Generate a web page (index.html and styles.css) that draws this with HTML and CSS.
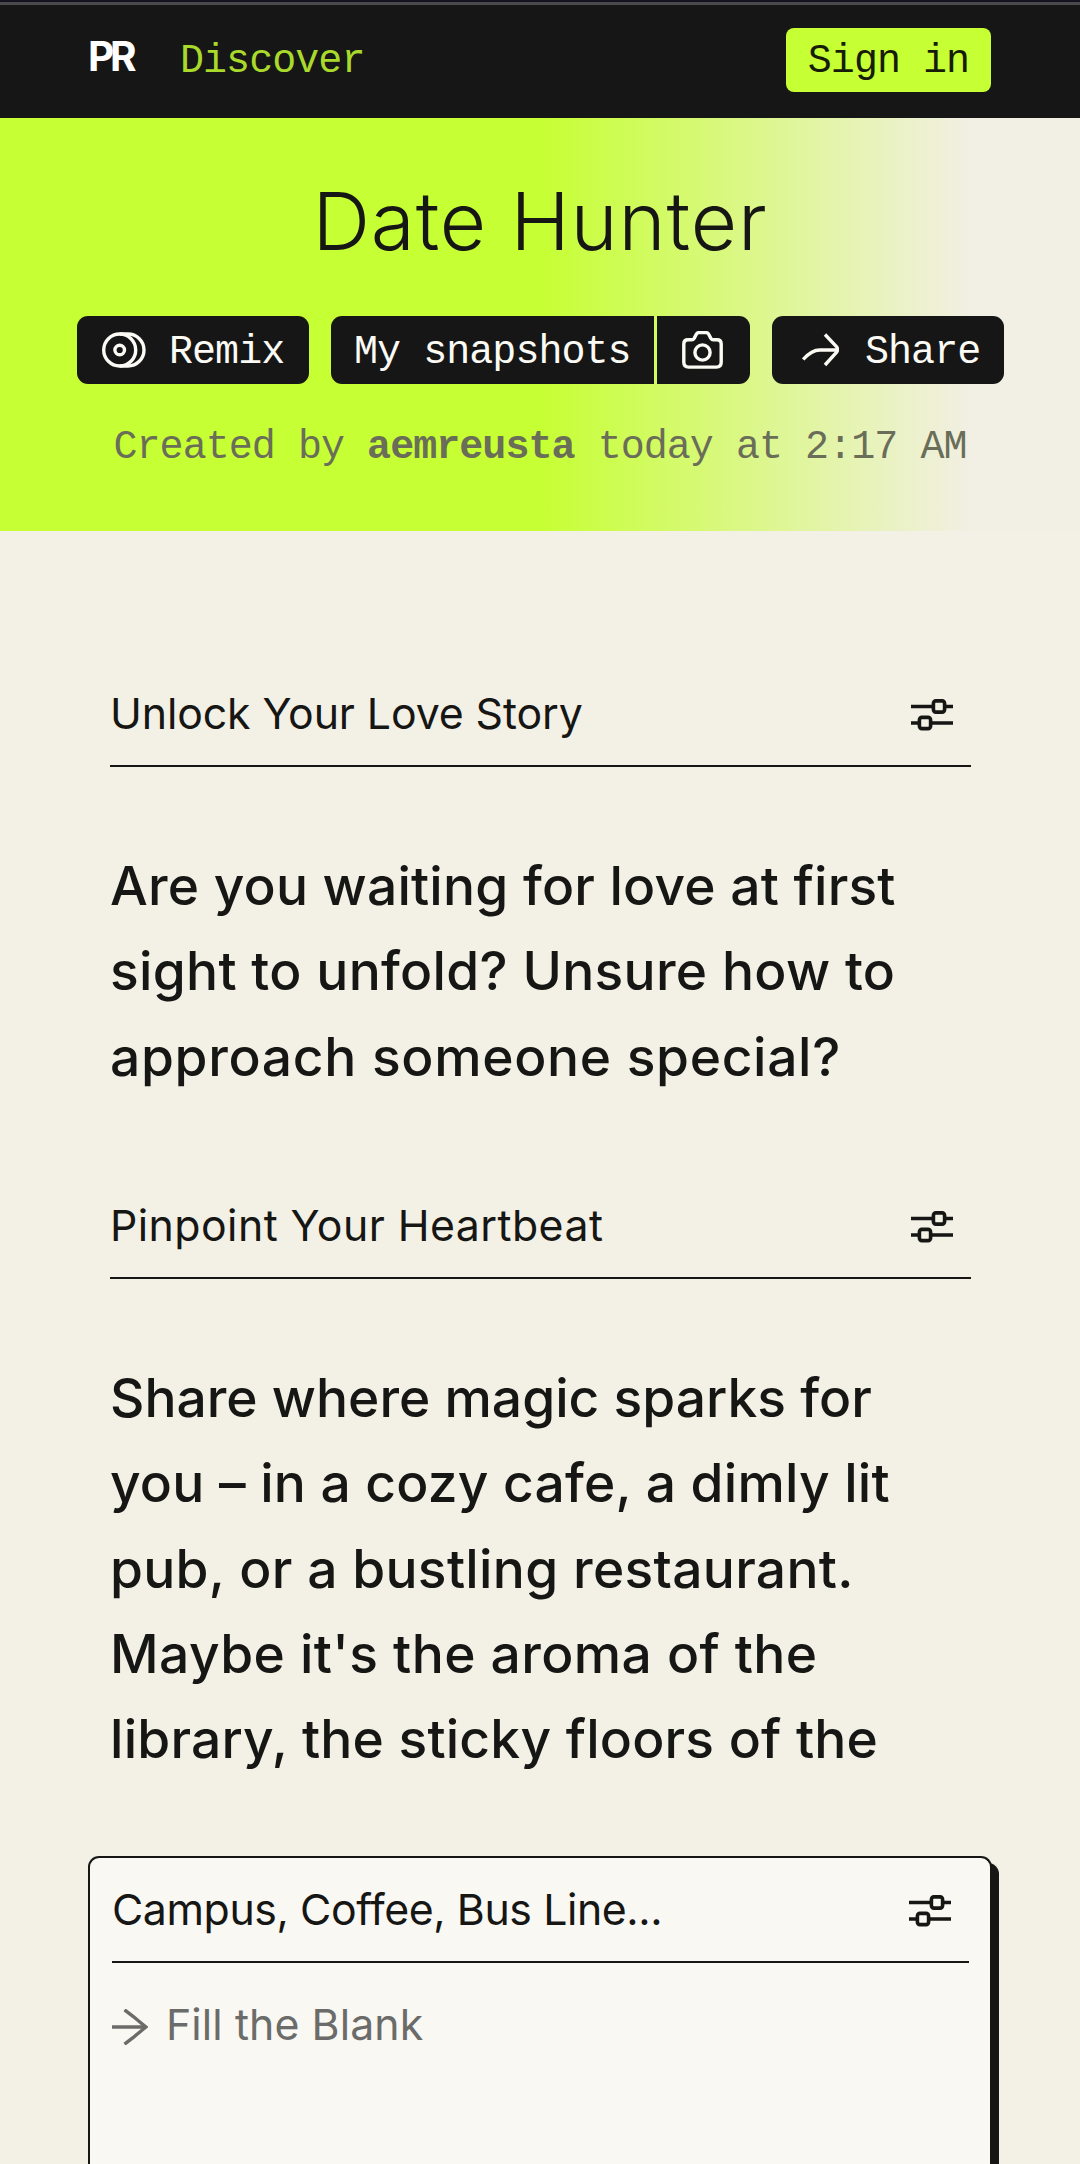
FILE: index.html
```html
<!DOCTYPE html>
<html lang="en">
<head>
<meta charset="utf-8">
<title>Date Hunter</title>
<link rel="stylesheet" href="styles.css">
</head>
<body>
<svg class="defs" aria-hidden="true">
  <symbol id="sliders" viewBox="0 0 42 32">
    <path d="M0 7.500h22M34 7.500h8M0 24h8M20 24h22"/>
    <rect x="22.400" y="1.900" width="11.200" height="11.200" rx="2.500"/>
    <rect x="8.400" y="18.400" width="11.200" height="11.200" rx="2.500"/>
  </symbol>
</svg>

<header class="topbar">
  <a class="logo">PR</a>
  <a class="nav-link">Discover</a>
  <button class="sign-in">Sign in</button>
</header>

<section class="hero">
  <h1 class="title">Date Hunter</h1>
  <div class="actions">
    <button class="btn remix">
      <svg class="icon" width="44" height="38" viewBox="0 0 44 38">
        <circle cx="17.700" cy="19" r="16"/>
        <circle cx="17.700" cy="19" r="4.800"/>
        <path d="M17.700 3h8.300a16 16 0 0 1 0 32h-8.300"/>
      </svg>
      <span>Remix</span>
    </button>
    <div class="split">
      <button class="btn snapshots"><span>My snapshots</span></button>
      <button class="btn camera">
        <svg class="icon" width="41" height="38" viewBox="0 0 41 38">
          <path d="M6 8.800h3.500q1.800 0 2.800-1.700l2-3.800q.9-1.700 2.700-1.700h7q1.800 0 2.700 1.700l2 3.800q1 1.700 2.800 1.700H35q4.200 0 4.200 4.200v18.300q0 4.800-4.800 4.800H6.600q-4.800 0-4.800-4.800V13q0-4.200 4.200-4.200z"/>
          <circle cx="20.500" cy="21.500" r="7.600"/>
        </svg>
      </button>
    </div>
    <button class="btn share">
      <svg class="icon" width="37" height="34" viewBox="0 0 37 34">
        <path d="M1.200 26.500Q9.500 17 18 17h17M23 1.500l11.200 11.800q2.600 3.200 0 6.400L23 32"/>
      </svg>
      <span>Share</span>
    </button>
  </div>
  <p class="byline">Created by <b>aemreusta</b> today at 2:17 AM</p>
</section>

<main class="content">
  <section class="block">
    <div class="block-head">
      <h2 class="t1">Unlock Your Love Story</h2>
      <svg class="sliders"><use href="#sliders"/></svg>
    </div>
    <p class="copy">
      <span class="line s2">Are you waiting for love at first</span>
      <span class="line s3">sight to unfold? Unsure how to</span>
      <span class="line s7">approach someone special?</span>
    </p>
  </section>
  <section class="block">
    <div class="block-head">
      <h2 class="t2">Pinpoint Your Heartbeat</h2>
      <svg class="sliders"><use href="#sliders"/></svg>
    </div>
    <p class="copy">
      <span class="line">Share where magic sparks for</span>
      <span class="line s2">you – in a cozy cafe, a dimly lit</span>
      <span class="line s3">pub, or a bustling restaurant.</span>
      <span class="line s4">Maybe it's the aroma of the</span>
      <span class="line s2">library, the sticky floors of the</span>
    </p>
  </section>
  <section class="card">
    <div class="block-head">
      <h2 class="t3">Campus, Coffee, Bus Line...</h2>
      <svg class="sliders"><use href="#sliders"/></svg>
    </div>
    <div class="field">
      <svg class="arrow" viewBox="0 0 36 36"><path d="M0 18h34"/><path d="M12.500 .800l8.500 6.500Q27 12.500 34 18Q27 23.500 21 28.700l-8.500 6.500"/></svg>
      <span>Fill the Blank</span>
    </div>
  </section>
</main>
</body>
</html>
```
FILE: styles.css
```css
* { box-sizing: border-box; margin: 0; padding: 0; }

html, body { height: 2164px; overflow: hidden; }

body {
  background: #f3f1e5;
  color: #161614;
  font-family: Inter, "Liberation Sans", sans-serif;
}

button { border: 0; }

svg { flex: none; fill: none; stroke: currentColor; }

.defs { position: absolute; width: 0; height: 0; }

.topbar {
  display: flex;
  height: 118px;
  padding: 21px 89px 0 88px;
  background: #161616;
  border-top: 5px solid #48484d;
  position: relative;
}

.topbar::before {
  content: "";
  position: absolute;
  inset: -5px 0 auto;
  height: 2px;
  background: #141420;
}

.topbar, .btn, .byline, .sign-in { white-space: pre; }

.logo {
  width: 92px;
  color: #fff;
  font-size: 40.500px;
  font-weight: 700;
  line-height: 62px;
  letter-spacing: -4.200px;
}

.nav-link, .sign-in, .btn, .byline {
  font-family: "Liberation Mono", monospace;
  font-size: 40px;
  letter-spacing: -0.95px;
}

.nav-link { color: #a9da2b; line-height: 71px; }

.sign-in {
  width: 205px;
  height: 64px;
  margin: 2px 0 0 auto;
  padding-top: 4px;
  border-radius: 8px;
  background: #c6ff33;
  color: #161c08;
  line-height: 60px;
}

.hero {
  height: 413px;
  padding-top: 48px;
  background: linear-gradient(90deg, #c6ff33 50%, #f2efe4 90%);
}

.title {
  font-size: 80px;
  font-weight: 300;
  line-height: 109px;
  letter-spacing: 0.9px;
  text-align: center;
}

.actions {
  display: flex;
  gap: 22px;
  margin: 41px 76px 0 77px;
}

.btn {
  display: flex;
  align-items: center;
  height: 68px;
  border-radius: 11px;
  background: #161616;
  color: #fbfaf4;
}

.btn span { padding-top: 4px; }
.btn .icon { stroke-width: 3.400; }

.remix { width: 232px; padding-left: 25px; gap: 23px; }
.split { display: flex; gap: 3px; }
.snapshots { width: 323px; padding-left: 23px; border-radius: 11px 0 0 11px; }
.camera { width: 93px; padding-left: 25px; border-radius: 0 11px 11px 0; }
.share { width: 232px; padding-left: 30px; gap: 26px; }

.byline {
  margin-top: 33px;
  color: #6a6d58;
  line-height: 62px;
  text-align: center;
}

.content { padding: 152px 88px 0; }

.block { padding: 0 21px 0 22px; }
.block + .block { margin-top: 95.500px; }

.block-head {
  display: flex;
  justify-content: space-between;
  height: 84px;
  padding-right: 18px;
  border-bottom: 2px solid #161614;
}

.block-head h2, .field {
  font-size: 42.800px;
  font-weight: 400;
  line-height: 62px;
}

.sliders {
  width: 42px;
  height: 32px;
  margin-top: 16px;
  stroke-width: 3.600;
}

.copy {
  margin-top: 76px;
  font-size: 53.300px;
  font-weight: 450;
  line-height: 85.400px;
}

.line { display: block; white-space: nowrap; }

.t1 { letter-spacing: -0.1px; }
.t2 { letter-spacing: 0.45px; }
.t3 { letter-spacing: -0.400px; }
.s2 { letter-spacing: 0.2px; }
.s3 { letter-spacing: 0.3px; }
.s4 { letter-spacing: 0.42px; }
.s7 { letter-spacing: 0.68px; }

.card {
  height: 307.500px;
  margin-top: 74.500px;
  padding: 21px 21px 0 22px;
  border: 2px solid #161614;
  border-bottom: 0;
  border-radius: 11px 11px 0 0;
  background: #f9f8f3;
  box-shadow: 7px 7px 0 #161614;
}

.field {
  display: flex;
  gap: 18px;
  margin-top: 31px;
  color: #6b6b69;
  letter-spacing: 0.1px;
}

.arrow { width: 36px; height: 36px; margin-top: 15px; stroke-width: 3.400; }
```
